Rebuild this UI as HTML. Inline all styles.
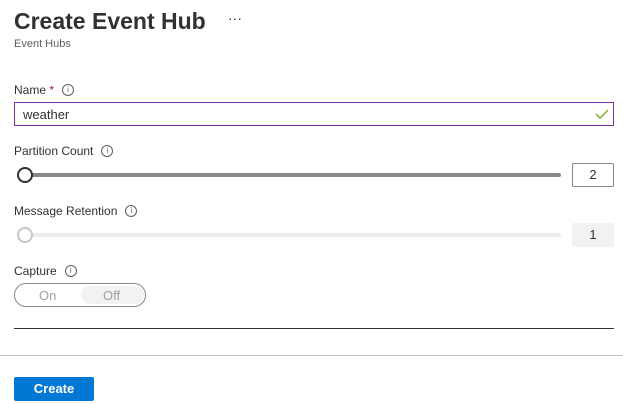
<!DOCTYPE html><html><head><style>
body{margin:0;width:623px;height:404px;background:#fff;font-family:"Liberation Sans",sans-serif;color:#323130;position:relative;overflow:hidden}
.a{position:absolute}
.lbl{font-size:12px;color:#323130}
.i{display:inline-block;width:10px;height:10px;border:1px solid #605e5c;border-radius:50%;font-size:8px;line-height:10px;text-align:center;color:#605e5c;margin-left:8px;vertical-align:top;margin-top:1px}
</style></head><body>
<div class="a" style="left:14px;top:8px;font-size:23px;font-weight:600;color:#323130">Create Event Hub</div>
<div class="a" style="left:228px;top:10px;font-size:14px">···</div>
<div class="a" style="left:14px;top:38px;font-size:11px;color:#605e5c">Event Hubs</div>

<div class="a lbl" style="left:14px;top:83px">Name <span style="color:#a4262c">*</span><span class="i">i</span></div>
<div class="a" style="left:14px;top:102px;width:598px;height:22px;border:1px solid #8a2da5"></div>
<div class="a" style="left:23px;top:107px;font-size:13px">weather</div>
<svg class="a" style="left:595px;top:108px" width="14" height="12"><path d="M1 6 L5 10 L13 2" stroke="#57a300" stroke-width="1.2" fill="none"/></svg>

<div class="a lbl" style="left:14px;top:144px">Partition Count<span class="i">i</span></div>
<div class="a" style="left:24px;top:173px;width:537px;height:4px;background:#8a8886;border-radius:2px"></div>
<div class="a" style="left:17px;top:167px;width:12px;height:12px;border:2px solid #323130;border-radius:50%;background:#fff"></div>
<div class="a" style="left:572px;top:163px;width:40px;height:22px;border:1px solid #8a8886;border-radius:2px;text-align:center;line-height:22px;font-size:13px">2</div>

<div class="a lbl" style="left:14px;top:204px">Message Retention<span class="i">i</span></div>
<div class="a" style="left:24px;top:233px;width:537px;height:4px;background:#edebe9;border-radius:2px"></div>
<div class="a" style="left:17px;top:227px;width:12px;height:12px;border:2px solid #c8c6c4;border-radius:50%;background:#fff"></div>
<div class="a" style="left:572px;top:223px;width:42px;height:24px;background:#f3f2f1;border-radius:2px;text-align:center;line-height:24px;font-size:13px">1</div>

<div class="a lbl" style="left:14px;top:264px">Capture<span class="i">i</span></div>
<div class="a" style="left:14px;top:283px;width:130px;height:22px;border:1px solid #8a8886;border-radius:12px"></div>
<div class="a" style="left:81px;top:286px;width:63px;height:18px;background:#f3f2f1;border-radius:9px"></div>
<div class="a" style="left:39px;top:288px;font-size:13px;color:#a19f9d">On</div>
<div class="a" style="left:103px;top:288px;font-size:13px;color:#a19f9d">Off</div>

<div class="a" style="left:14px;top:328px;width:600px;height:1px;background:#323130"></div>
<div class="a" style="left:0;top:355px;width:623px;height:1px;background:#c8c6c4"></div>
<div class="a" style="left:14px;top:377px;width:80px;height:24px;background:#0078d4;border-radius:2px;color:#fff;font-size:13px;font-weight:600;text-align:center;line-height:24px">Create</div>
</body></html>
